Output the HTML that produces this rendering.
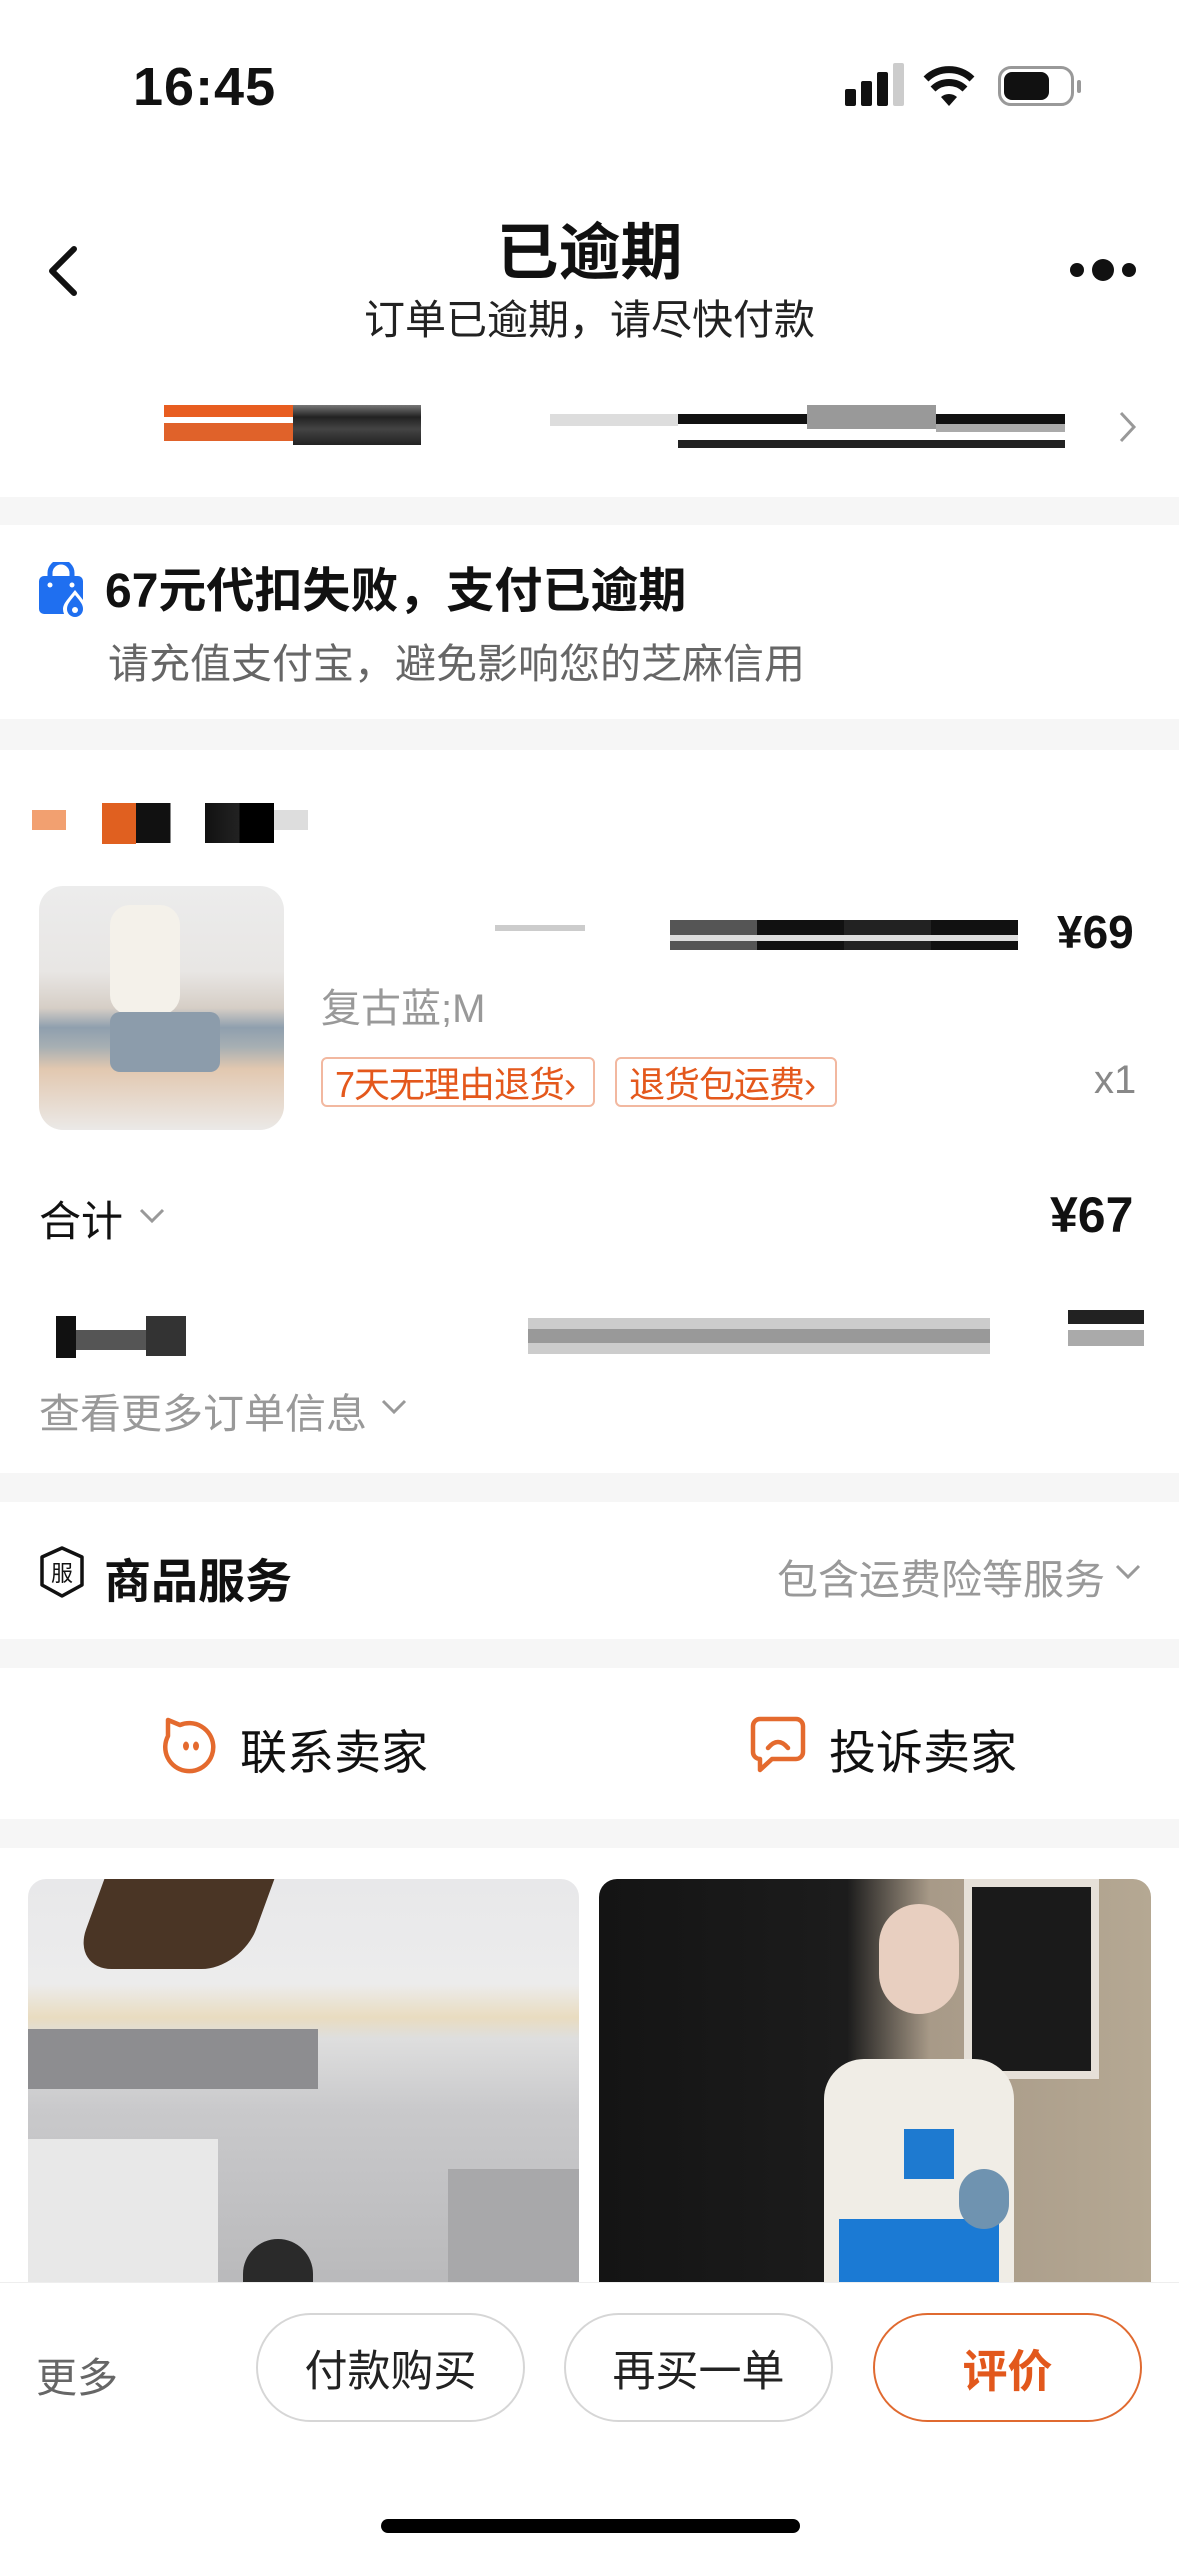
<!DOCTYPE html>
<html><head><meta charset="utf-8"><style>
*{margin:0;padding:0;box-sizing:border-box}
body{width:1179px;height:2556px;position:relative;overflow:hidden;background:#fff;font-family:"Liberation Sans","Noto Sans CJK SC",sans-serif;color:#111}
.a{position:absolute;white-space:nowrap}
.sep{position:absolute;left:0;width:1179px;background:#f6f6f6}
.bar{position:absolute}
.btn{position:absolute;top:2313px;height:109px;width:269px;border:2px solid #d6d6d6;border-radius:55px;font-size:43px;display:flex;align-items:center;justify-content:center;color:#222;background:#fff}
.tag{position:absolute;top:1057px;height:50px;border:2px solid #f2b8a0;border-radius:6px;color:#e4581c;font-size:36px;display:flex;align-items:center;padding-left:12px;background:#fff;letter-spacing:-1px}
</style></head><body>
<!-- status bar -->
<div class="a" style="left:133px;top:56px;font-size:54px;font-weight:bold;letter-spacing:1px">16:45</div>
<div class="bar" style="left:845px;top:89px;width:11px;height:17px;background:#111;border-radius:2px"></div>
<div class="bar" style="left:861px;top:81px;width:11px;height:25px;background:#111;border-radius:2px"></div>
<div class="bar" style="left:877px;top:72px;width:11px;height:34px;background:#111;border-radius:2px"></div>
<div class="bar" style="left:893px;top:63px;width:11px;height:43px;background:#ccc;border-radius:2px"></div>
<svg class="a" style="left:923px;top:64px" width="52" height="42" viewBox="0 0 52 42"><path d="M26 42 L18 33 A12 12 0 0 1 34 33 Z" fill="#111"/><path d="M10 25 A23 23 0 0 1 42 25" stroke="#111" stroke-width="7" fill="none"/><path d="M3 15 A33 33 0 0 1 49 15" stroke="#111" stroke-width="7" fill="none"/></svg>
<div class="bar" style="left:998px;top:66px;width:76px;height:40px;border:3px solid #999;border-radius:13px"></div>
<div class="bar" style="left:1004px;top:72px;width:45px;height:28px;background:#111;border-radius:8px"></div>
<div class="bar" style="left:1077px;top:80px;width:4px;height:13px;background:#999;border-radius:2px"></div>
<!-- nav -->
<svg class="a" style="left:44px;top:245px" width="36" height="52" viewBox="0 0 36 52"><path d="M30 4 L8 26 L30 48" stroke="#111" stroke-width="6" fill="none" stroke-linecap="round" stroke-linejoin="round"/></svg>
<div class="a" style="left:0;width:1179px;text-align:center;top:202px;font-size:62px;font-weight:bold">已逾期</div>
<div class="a" style="left:0;width:1179px;text-align:center;top:286px;font-size:41px;color:#222">订单已逾期，请尽快付款</div>
<div class="bar" style="left:1070px;top:263px;width:14px;height:14px;border-radius:50%;background:#111"></div>
<div class="bar" style="left:1092px;top:259px;width:22px;height:22px;border-radius:50%;background:#111"></div>
<div class="bar" style="left:1122px;top:263px;width:14px;height:14px;border-radius:50%;background:#111"></div>
<!-- blurred row -->
<div class="bar" style="left:164px;top:405px;width:129px;height:12px;background:#e85d20"></div>
<div class="bar" style="left:164px;top:423px;width:129px;height:18px;background:#e0622a"></div>
<div class="bar" style="left:293px;top:405px;width:128px;height:40px;background:linear-gradient(#777,#222 30%,#444 60%,#222)"></div>
<div class="bar" style="left:550px;top:414px;width:128px;height:12px;background:#ddd"></div>
<div class="bar" style="left:678px;top:414px;width:387px;height:10px;background:#111"></div>
<div class="bar" style="left:807px;top:405px;width:129px;height:24px;background:#999"></div>
<div class="bar" style="left:936px;top:424px;width:129px;height:8px;background:#aaa"></div>
<div class="bar" style="left:678px;top:440px;width:387px;height:8px;background:#222"></div>
<svg class="a" style="left:1118px;top:410px" width="20" height="34" viewBox="0 0 20 34"><path d="M3 3 L16 17 L3 31" stroke="#999" stroke-width="3" fill="none"/></svg>
<div class="sep" style="top:497px;height:28px"></div>
<!-- alert -->
<svg class="a" style="left:37px;top:562px" width="54" height="56" viewBox="0 0 54 56"><path d="M13 16 V11 A11 11 0 0 1 35 11 V16" stroke="#1f6ff0" stroke-width="5" fill="none"/><rect x="2" y="14" width="44" height="38" rx="5" fill="#1f6ff0"/><circle cx="13" cy="23" r="2.5" fill="#fff"/><circle cx="35" cy="23" r="2.5" fill="#fff"/><path d="M38 28 C30 38 26 42 26 47 A12 12 0 0 0 50 47 C50 42 46 38 38 28Z" fill="#fff"/><path d="M38 33 C32 40 30 43 30 47 A8 8 0 0 0 46 47 C46 43 44 40 38 33Z" fill="#1f6ff0"/><circle cx="38" cy="48" r="3" fill="#fff"/></svg>
<div class="a" style="left:105px;top:551px;font-size:48px;font-weight:bold">67元代扣失败，支付已逾期</div>
<div class="a" style="left:108px;top:630px;font-size:41px;color:#666">请充值支付宝，避免影响您的芝麻信用</div>
<div class="sep" style="top:719px;height:31px"></div>
<!-- store -->
<div class="bar" style="left:32px;top:810px;width:34px;height:20px;background:#f2a070"></div>
<div class="bar" style="left:102px;top:803px;width:34px;height:41px;background:#e06020"></div>
<div class="bar" style="left:136px;top:803px;width:138px;height:40px;background:linear-gradient(90deg,#111 25%,#fff 25%,#fff 50%,#111 50%,#222 75%,#000 75%)"></div>
<div class="bar" style="left:274px;top:810px;width:34px;height:20px;background:#ddd"></div>
<!-- product -->
<div class="bar" style="left:39px;top:886px;width:245px;height:244px;border-radius:24px;background:linear-gradient(180deg,#ececec 0%,#e8e6e4 35%,#d6cec6 50%,#8f9fae 58%,#a7afb3 66%,#e2c8b0 75%,#ebe9e7 100%)"></div>
<div class="bar" style="left:110px;top:905px;width:70px;height:110px;background:#f4f1ea;border-radius:20px"></div>
<div class="bar" style="left:110px;top:1012px;width:110px;height:60px;background:#8c9cab;border-radius:10px"></div>
<div class="bar" style="left:495px;top:925px;width:90px;height:6px;background:#ccc"></div>
<div class="bar" style="left:670px;top:920px;width:348px;height:30px;background:linear-gradient(90deg,#555 0 25%,#111 25% 50%,#222 50% 75%,#111 75%)"></div>
<div class="bar" style="left:670px;top:935px;width:348px;height:6px;background:#ddd"></div>
<div class="a" style="left:1057px;top:905px;font-size:46px;font-weight:bold">¥69</div>
<div class="a" style="left:321px;top:976px;font-size:40px;color:#999">复古蓝;M</div>
<div class="tag" style="left:321px;width:274px">7天无理由退货›</div>
<div class="tag" style="left:615px;width:222px">退货包运费›</div>
<div class="a" style="left:1094px;top:1058px;font-size:40px;color:#888">x1</div>
<div class="a" style="left:39px;top:1188px;font-size:42px">合计</div>
<svg class="a" style="left:138px;top:1207px" width="28" height="18" viewBox="0 0 28 18"><path d="M3 3 L14 14 L25 3" stroke="#999" stroke-width="3" fill="none"/></svg>
<div class="a" style="left:1050px;top:1186px;font-size:50px;font-weight:bold">¥67</div>
<div class="bar" style="left:56px;top:1316px;width:20px;height:42px;background:#111"></div>
<div class="bar" style="left:76px;top:1330px;width:70px;height:20px;background:#555"></div>
<div class="bar" style="left:146px;top:1316px;width:40px;height:40px;background:#333"></div>
<div class="bar" style="left:528px;top:1318px;width:462px;height:36px;background:linear-gradient(180deg,#ccc 0 30%,#999 30% 70%,#ccc 70%)"></div>
<div class="bar" style="left:1068px;top:1310px;width:76px;height:14px;background:#222"></div>
<div class="bar" style="left:1068px;top:1330px;width:76px;height:16px;background:#aaa"></div>
<div class="a" style="left:39px;top:1380px;font-size:41px;color:#999">查看更多订单信息</div>
<svg class="a" style="left:380px;top:1398px" width="28" height="18" viewBox="0 0 28 18"><path d="M3 3 L14 14 L25 3" stroke="#999" stroke-width="3" fill="none"/></svg>
<div class="sep" style="top:1473px;height:29px"></div>
<!-- service -->
<svg class="a" style="left:38px;top:1545px" width="48" height="54" viewBox="0 0 48 54"><path d="M24 3 L44 12 V40 L24 51 L4 40 V12 Z" stroke="#111" stroke-width="3.5" fill="none" stroke-linejoin="round"/><text x="24" y="36" font-size="22" text-anchor="middle" fill="#111" font-family="Noto Sans CJK SC">服</text></svg>
<div class="a" style="left:104px;top:1543px;font-size:47px;font-weight:bold">商品服务</div>
<div class="a" style="left:777px;top:1546px;font-size:41px;color:#999">包含运费险等服务</div>
<svg class="a" style="left:1114px;top:1563px" width="28" height="18" viewBox="0 0 28 18"><path d="M3 3 L14 14 L25 3" stroke="#999" stroke-width="3" fill="none"/></svg>
<div class="sep" style="top:1639px;height:29px"></div>
<!-- contact -->
<svg class="a" style="left:160px;top:1716px" width="56" height="58" viewBox="0 0 56 58"><path d="M8 4 L20 9 A24 24 0 1 1 8 20 Z" stroke="#e46a2e" stroke-width="4.5" fill="none" stroke-linejoin="round"/><ellipse cx="26" cy="30" rx="3" ry="4.5" fill="#e46a2e"/><ellipse cx="36" cy="30" rx="3" ry="4.5" fill="#e46a2e"/></svg>
<div class="a" style="left:240px;top:1714px;font-size:47px">联系卖家</div>
<svg class="a" style="left:750px;top:1716px" width="56" height="58" viewBox="0 0 56 58"><path d="M10 3 H46 A7 7 0 0 1 53 10 V36 A7 7 0 0 1 46 43 H22 L10 54 V43 A7 7 0 0 1 3 36 V10 A7 7 0 0 1 10 3 Z" stroke="#e46a2e" stroke-width="4.5" fill="none" stroke-linejoin="round"/><path d="M18 32 Q28 20 38 32" stroke="#e46a2e" stroke-width="4.5" fill="none" stroke-linecap="round"/></svg>
<div class="a" style="left:829px;top:1714px;font-size:47px">投诉卖家</div>
<div class="sep" style="top:1819px;height:29px"></div>
<!-- feed images -->
<div class="bar" style="left:28px;top:1879px;width:551px;height:420px;border-radius:18px 18px 0 0;overflow:hidden;background:linear-gradient(180deg,#e8e8ea 0%,#ececec 25%,#e9dcc0 33%,#dedede 38%,#c9c9cb 55%,#b8b8ba 100%)">
<div class="bar" style="left:60px;top:0;width:170px;height:90px;background:#4a3525;border-radius:0 0 40px 40px;transform:skewX(-20deg)"></div>
<div class="bar" style="left:0;top:150px;width:290px;height:60px;background:#8d8d90"></div>
<div class="bar" style="left:0;top:260px;width:190px;height:160px;background:#e8e8e8"></div>
<div class="bar" style="left:420px;top:290px;width:131px;height:130px;background:#a8a8aa"></div>
<div class="bar" style="left:215px;top:360px;width:70px;height:60px;background:#2a2a2a;border-radius:35px 35px 0 0"></div>
</div>
<div class="bar" style="left:599px;top:1879px;width:552px;height:420px;border-radius:18px 18px 0 0;overflow:hidden;background:linear-gradient(90deg,#141414 0%,#1c1c1c 45%,#a89a88 60%,#b5a893 100%)">
<div class="bar" style="left:365px;top:0;width:135px;height:200px;background:#1a1a1a;border:8px solid #e6e0d8"></div>
<div class="bar" style="left:280px;top:25px;width:80px;height:110px;background:#e8cfc0;border-radius:40px"></div>
<div class="bar" style="left:225px;top:180px;width:190px;height:240px;background:#f0ede6;border-radius:40px 40px 0 0"></div>
<div class="bar" style="left:305px;top:250px;width:50px;height:50px;background:#1e7ad0"></div>
<div class="bar" style="left:240px;top:340px;width:160px;height:80px;background:#1b7ad4"></div>
<div class="bar" style="left:360px;top:290px;width:50px;height:60px;background:#6f93b0;border-radius:25px"></div>
</div>
<!-- bottom bar -->
<div class="bar" style="left:0;top:2282px;width:1179px;height:274px;background:#fff;border-top:1px solid #eee"></div>
<div class="a" style="left:36px;top:2344px;font-size:41px;color:#666">更多</div>
<div class="btn" style="left:256px">付款购买</div>
<div class="btn" style="left:564px">再买一单</div>
<div class="btn" style="left:873px;border-color:#e06a30;color:#e2581c;font-weight:bold;font-size:45px">评价</div>
<div class="bar" style="left:381px;top:2519px;width:419px;height:14px;background:#000;border-radius:7px"></div>
</body></html>
